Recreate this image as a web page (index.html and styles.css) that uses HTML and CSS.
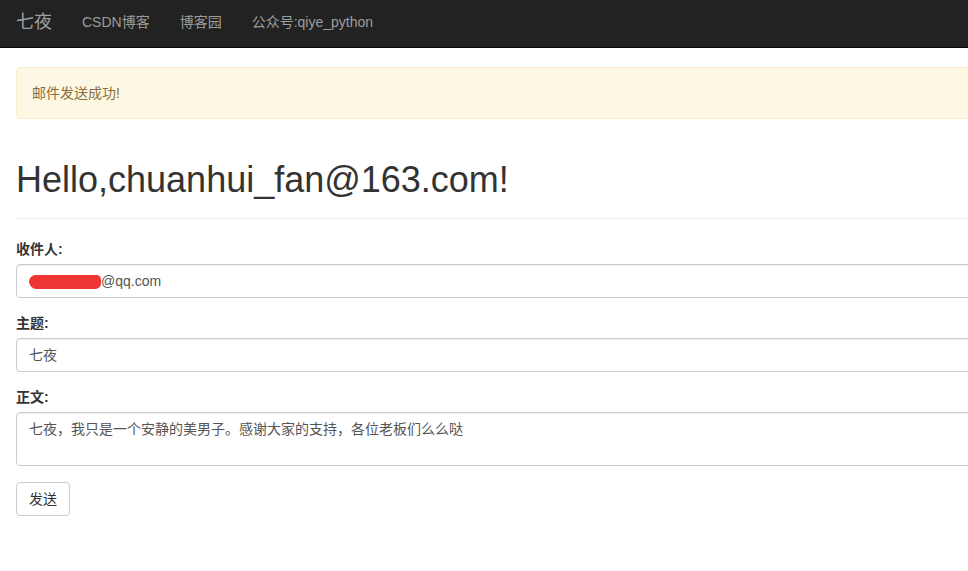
FILE: index.html
```html
<!DOCTYPE html>
<html lang="zh-CN">
<head>
<meta charset="utf-8">
<title>七夜</title>
<link rel="stylesheet" href="styles.css">
</head>
<body>
<nav class="navbar">
  <div class="container nav-inner">
    <a class="brand" href="#">七夜</a>
    <a class="nav-link" href="#">CSDN博客</a>
    <a class="nav-link" href="#">博客园</a>
    <a class="nav-link" href="#">公众号:qiye_python</a>
  </div>
</nav>
<main class="container">
  <div class="alert">邮件发送成功!</div>
  <h1 class="title">Hello,chuanhui_fan@163.com!</h1>
  <hr class="divider">
  <form class="mail-form">
    <div class="form-group">
      <label class="label">收件人:</label>
      <div class="control"><span class="redact"></span>@qq.com</div>
    </div>
    <div class="form-group">
      <label class="label">主题:</label>
      <div class="control">七夜</div>
    </div>
    <div class="form-group">
      <label class="label">正文:</label>
      <div class="control textarea">七夜，我只是一个安静的美男子。感谢大家的支持，各位老板们么么哒</div>
    </div>
    <button class="btn" type="button">发送</button>
  </form>
</main>
</body>
</html>
```
FILE: styles.css
```css
html, body {
  margin: 0;
  padding: 0;
  overflow: hidden;
  background: #fff;
}
body {
  font-family: "Liberation Sans", "Noto Sans CJK SC", sans-serif;
  font-size: 14px;
  line-height: 20px;
  color: #333;
}
.container {
  width: 1170px;
  padding-left: 16px;
  padding-right: 15px;
  box-sizing: border-box;
}
.navbar {
  height: 47px;
  background: #222;
  border-bottom: 1px solid #080808;
}
.nav-inner {
  display: flex;
  height: 47px;
}
.brand, .nav-link {
  color: #9d9d9d;
  text-decoration: none;
  line-height: 20px;
  padding-top: 12px;
}
.brand {
  font-size: 18px;
  padding-right: 15px;
}
.nav-link {
  padding-left: 15px;
  padding-right: 15px;
}
.alert {
  margin-top: 19px;
  margin-bottom: 20px;
  padding: 15px;
  background: #fcf8e3;
  border: 1px solid #faebcc;
  border-radius: 4px;
  color: #8a6d3b;
}
.title {
  margin: 41px 0 0;
  font-size: 36px;
  line-height: 39.6px;
  font-weight: 500;
  color: #333;
}
.divider {
  margin: 18px 0 20px;
  border: 0;
  border-top: 1px solid #eee;
}
.form-group {
  margin-bottom: 15px;
}
.label {
  display: block;
  margin-bottom: 5px;
  font-weight: bold;
}
.control {
  height: 34px;
  box-sizing: border-box;
  padding: 6px 12px;
  border: 1px solid #ccc;
  border-radius: 4px;
  color: #555;
  box-shadow: inset 0 1px 1px rgba(0,0,0,.075);
  display: flex;
  align-items: center;
}
.textarea {
  height: 54px;
  align-items: flex-start;
}
.redact {
  display: inline-block;
  width: 72px;
  height: 14px;
  margin-top: 2px;
  background: #f03535;
  border-radius: 7px 5px 6px 8px;
}
.btn {
  height: 34px;
  padding: 6px 12px;
  font: inherit;
  color: #333;
  background: #fff;
  border: 1px solid #ccc;
  border-radius: 4px;
  margin-top: 1px;
}
```
